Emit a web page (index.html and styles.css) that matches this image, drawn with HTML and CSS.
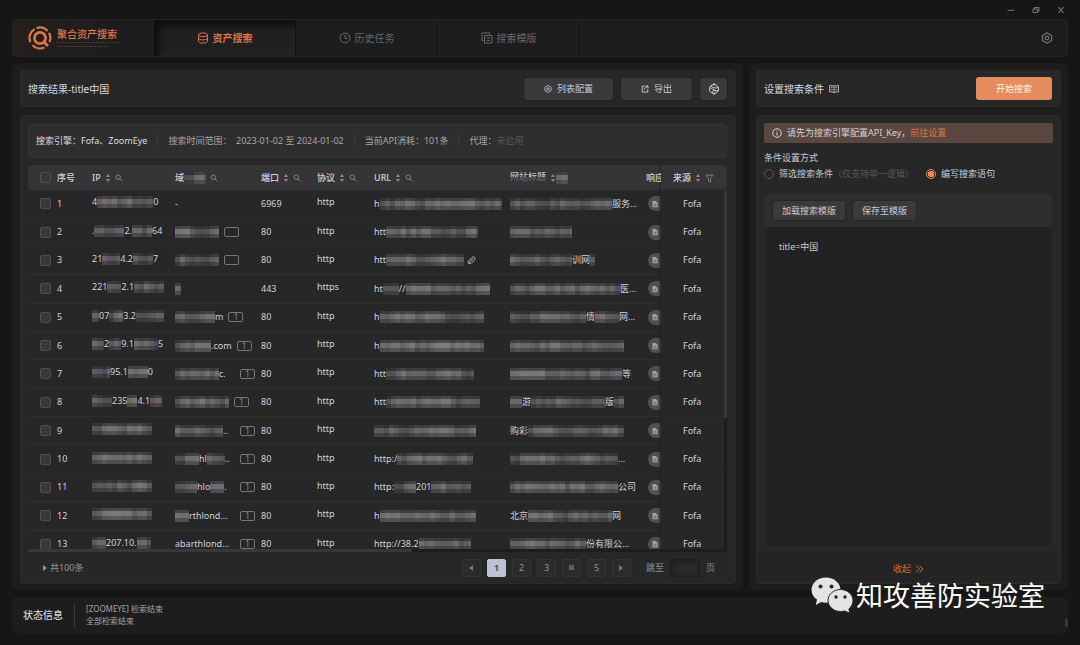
FILE: index.html
```html
<!DOCTYPE html>
<html lang="zh-CN">
<head>
<meta charset="utf-8">
<title>聚合资产搜索</title>
<link rel="stylesheet" href="styles.css">
</head>
<body>
<svg class="defs" aria-hidden="true">
  <symbol id="i-sort" viewBox="0 0 6 10"><path d="M3 1 5.2 4H.8zM3 9 .8 6h4.400z" fill="currentColor"/></symbol>
  <symbol id="i-search" viewBox="0 0 8 8"><circle cx="3.200" cy="3.200" r="2.200" fill="none" stroke="currentColor"/><path d="M5 5l2.300 2.300" stroke="currentColor"/></symbol>
  <symbol id="i-filter" viewBox="0 0 9 9"><path d="M1 1.200h7L5.500 4.500v3.600L3.500 7V4.500z" fill="none" stroke="currentColor" stroke-width=".9"/></symbol>
  <symbol id="i-doc" viewBox="0 0 8 8"><path d="M1.500 1h3.200L6.700 3v4.300H1.500z" fill="#9ba3b5"/><path d="M2.600 4.300h3M2.600 5.800h3" stroke="#55565c" stroke-width=".7"/></symbol>
  <symbol id="i-hex" viewBox="0 0 12 12"><path d="M6 .8l4.600 2.600v5.200L6 11.200 1.400 8.600V3.400z" fill="none" stroke="currentColor" stroke-width="1.200" stroke-linejoin="round"/><circle cx="6" cy="6" r="1.800" fill="none" stroke="currentColor" stroke-width="1.200"/></symbol>
</svg>
<div class="app">
  <header class="titlebar">
    <button aria-label="最小化"><svg viewBox="0 0 8 8"><path d="M.5 4.300h7" stroke="currentColor"/></svg></button>
    <button aria-label="还原"><svg viewBox="0 0 8 8"><path d="M1 3h4.500v3.500H1zM2.500 3V1.500H7V5H5.500" fill="none" stroke="currentColor"/></svg></button>
    <button aria-label="关闭"><svg viewBox="0 0 8 8"><path d="M1.500 1.200l5 5.600M6.500 1.200l-5 5.600" stroke="currentColor" stroke-width="1.100"/></svg></button>
  </header>

  <nav class="topbar">
    <div class="brand">
      <svg class="logo" viewBox="0 0 24 24" fill="none" stroke="#d9784b">
        <path d="M2.400 16.200A10.400 10.400 0 0 1 6.500 3.100M8.500 2.200A10.400 10.400 0 0 1 19.600 4.900M21 6.800A10.400 10.400 0 0 1 21.500 16M16.500 21.400A10.400 10.400 0 0 1 4.500 19.200" stroke-width="2.200"/>
        <circle cx="12" cy="12" r="5.600" stroke-width="2.600"/>
        <path d="M15.500 15.500l4.500 4.500" stroke-width="2.600"/>
      </svg>
      <div class="brand-name"><span>聚合资产搜索</span>
        <svg viewBox="0 0 62 7" class="tagline"><path d="M0 1.500h62" stroke="#4a413d" stroke-dasharray="2 1 1 1"/><path d="M0 5.500h52" stroke="#4a413d" stroke-dasharray="1 1 2 1"/></svg>
      </div>
    </div>
    <button class="tab active"><svg viewBox="0 0 12 12" fill="none" stroke="currentColor"><ellipse cx="6" cy="2.800" rx="4.500" ry="1.900"/><path d="M1.500 2.800v6.400c0 1.100 2 1.900 4.500 1.900s4.500-.8 4.500-1.900V2.800M1.500 6c0 1.100 2 1.900 4.500 1.900s4.500-.8 4.500-1.900"/></svg>资产搜索</button>
    <button class="tab"><svg viewBox="0 0 12 12" fill="none" stroke="currentColor"><circle cx="6" cy="6" r="4.900"/><path d="M6 3v3.300h2.500"/></svg>历史任务</button>
    <button class="tab"><svg viewBox="0 0 12 12" fill="none" stroke="currentColor"><path d="M3.500 3.500h7.500v7.500H3.500zM2.500 8.500H1V1h7.500v1.500M5.500 6h3.500M5.500 8.500h3.500"/></svg>搜索模版</button>
    <button class="gear" aria-label="设置"><svg><use href="#i-hex"/></svg></button>
  </nav>

  <main class="main">
    <section class="panel results">
      <div class="card head">
        <h1>搜索结果-title中国</h1>
        <div class="actions">
          <button class="btn wide"><svg><use href="#i-hex"/></svg>列表配置</button>
          <button class="btn"><svg viewBox="0 0 10 10" fill="none" stroke="currentColor" stroke-width="1.200"><path d="M5 1.500H1.500v7.300h7V5M4 6c.2-2 1.800-3.500 4.500-4M6 1.200h2.700V4"/></svg>导出</button>
          <button class="btn square" aria-label="网络"><svg viewBox="0 0 12 12" fill="none" stroke="currentColor"><circle cx="6" cy="6" r="4.500"/><path d="M6 0v2.500M6 9.500V12M1.500 5c3-.5 3.500 3.500 9 2.500M3 2.500c1 2.500 4 3 7.500 2M4 10c.5-2 1-3 4-2"/></svg></button>
        </div>
      </div>

      <div class="card list">
        <div class="summary">
          <span class="strong">搜索引擎：Fofa、ZoomEye</span>
          <span>搜索时间范围：&nbsp;&nbsp;2023-01-02 至 2024-01-02</span>
          <span>当前API消耗：101条</span>
          <span>代理：<em>未启用</em></span>
        </div>
        <div class="table-wrap">
          <table>
            <colgroup><col class="c-check"><col class="c-no"><col class="c-ip"><col class="c-domain"><col class="c-port"><col class="c-proto"><col class="c-url"><col><col class="c-resp"><col class="c-src"></colgroup>
            <thead><tr>
              <th class="check"><input type="checkbox" aria-label="全选"></th>
              <th>序号</th>
              <th>IP<svg class="sort"><use href="#i-sort"/></svg><svg class="find"><use href="#i-search"/></svg></th>
              <th><span class="cell" data-parts="域|22|"></span><svg class="find"><use href="#i-search"/></svg></th>
              <th>端口<svg class="sort"><use href="#i-sort"/></svg><svg class="find"><use href="#i-search"/></svg></th>
              <th>协议<svg class="sort"><use href="#i-sort"/></svg><svg class="find"><use href="#i-search"/></svg></th>
              <th>URL<svg class="sort"><use href="#i-sort"/></svg><svg class="find"><use href="#i-search"/></svg></th>
              <th><span class="masked">网站标题</span><svg class="sort"><use href="#i-sort"/></svg><span class="cell" data-parts="|12|"></span></th>
              <th class="resp">响应</th>
              <th class="src">来源<svg class="sort"><use href="#i-sort"/></svg><svg class="funnel"><use href="#i-filter"/></svg></th>
            </tr></thead>
            <tbody id="rows"></tbody>
          </table>
          <div class="vbar"><i></i></div>
          <div class="hbar"><i></i></div>
        </div>
        <footer class="pager">
          <span class="total"><svg viewBox="0 0 4 6"><path d="M0 0l4 3-4 3z" fill="currentColor"/></svg>共100条</span>
          <div class="pages">
            <button aria-label="上一页"><svg viewBox="0 0 4 6"><path d="M4 0L0 3l4 3z" fill="currentColor"/></svg></button>
            <button class="current">1</button><button>2</button><button>3</button>
            <button aria-label="更多" class="more"><i></i></button><button>5</button>
            <button aria-label="下一页"><svg viewBox="0 0 4 6"><path d="M0 0l4 3-4 3z" fill="currentColor"/></svg></button>
          </div>
          <label class="jump">跳至<input type="text" aria-label="页码">页</label>
        </footer>
      </div>
    </section>

    <aside class="panel side">
      <div class="card head">
        <h2>设置搜索条件</h2>
        <svg class="book" viewBox="0 0 10 8" fill="none" stroke="currentColor" stroke-width=".9"><path d="M5 1.200C3.800.6 2 .6.600.6v6.200c1.400 0 3.200 0 4.400.7 1.200-.7 3-.7 4.400-.7V.6C8 .6 6.200.6 5 1.200zM5 1.200v6.300M2 2.600h1.500M2 4.500h1.500M6.500 2.600H8M6.500 4.500H8"/></svg>
        <button class="start">开始搜索</button>
      </div>
      <div class="card conditions">
        <div class="form">
          <p class="alert"><svg viewBox="0 0 10 10" fill="none" stroke="currentColor"><circle cx="5" cy="5" r="4.300"/><path d="M5 4.300v3.200M5 2.300v1.100"/></svg>请先为搜索引擎配置API_Key，<a href="#">前往设置</a></p>
          <fieldset>
            <legend>条件设置方式</legend>
            <label><input type="radio" name="mode">筛选搜索条件<em>（仅支持单一逻辑）</em></label>
            <label><input type="radio" name="mode" checked>编写搜索语句</label>
          </fieldset>
          <div class="editor">
            <div class="tools"><button>加载搜索模版</button><button>保存至模版</button></div>
            <textarea aria-label="搜索语句" spellcheck="false">title=中国</textarea>
          </div>
        </div>
        <button class="collapse">收起<svg viewBox="0 0 9 8" fill="none" stroke="currentColor"><path d="M1 .5L4.500 4 1 7.500M4.500.5L8 4 4.500 7.500"/></svg></button>
      </div>
    </aside>
  </main>

  <footer class="status">
    <strong>状态信息</strong>
    <p>[ZOOMEYE] 检索结束<br>全部检索结束</p>
    <i class="grip"></i>
  </footer>
</div>
<div class="watermark">
  <svg viewBox="0 0 42 36">
    <path d="M15 .5C7 .5.5 5.900.5 13c0 4 2 7.300 5.500 9.600L4.800 28l5.400-3c1.500.5 3.200.7 4.800.7C23 25.700 29.500 20 29.500 13S23 .5 15 .5z" fill="#e4e4e4"/>
    <path d="M29.500 12.500c-7 0-12.500 5-12.500 11s5.500 11 12.500 11c1.500 0 3-.2 4.300-.6l5.200 2.500-1.200-4.400c2.500-2 4.200-5 4.200-8.500 0-6-5.500-11-12.500-11z" fill="#e4e4e4" stroke="#222" stroke-width="1"/>
    <g fill="#222"><circle cx="9.500" cy="9.500" r="2"/><circle cx="20.500" cy="9.500" r="2"/><circle cx="25" cy="20" r="1.700"/><circle cx="34" cy="20" r="1.700"/></g>
  </svg><span>知攻善防实验室</span>
</div>
<script src="rows.js"></script>
</body>
</html>
```

FILE: styles.css
```css
* { box-sizing: border-box; }
body {
  margin: 0;
  background: #161616;
  color: #c9cad2;
  font: 9px/12px "Noto Sans", "Noto Sans CJK SC", sans-serif;
}
button, input, textarea { font: inherit; color: inherit; margin: 0; }
button { border: 0; padding: 0; background: none; cursor: pointer; }
em { font-style: normal; color: #58585b; }
h1, h2, p { margin: 0; font-weight: 400; }
h1, h2 { font-size: 10px; line-height: 16px; color: #d8d9e2; }
svg { flex: none; }
.defs { position: absolute; width: 0; height: 0; }
.app { display: flex; flex-direction: column; height: 100vh; padding: 0 12px 12px; }

.titlebar { display: flex; justify-content: flex-end; align-items: center; gap: 17px; height: 19px; padding: 0 3px 0 0; color: #77777a; }
.titlebar button { display: flex; }
.titlebar svg { width: 8px; height: 8px; }

.topbar { display: flex; height: 38px; margin-bottom: 6px; border: 1px solid #242424; border-radius: 4px; background: #1d1d1d; }
.brand { display: flex; align-items: center; gap: 5px; width: 141px; padding-left: 15px; border-radius: 4px 0 0 4px; background: linear-gradient(90deg, #251f1d, #1d1d1d 70%); }
.logo { width: 24px; height: 24px; }
.brand-name { display: flex; flex-direction: column; gap: 1px; color: #d9784b; font-size: 10px; font-weight: 500; }
.tagline { width: 62px; height: 7px; }
.tab { display: flex; align-items: center; justify-content: center; gap: 4px; width: 142px; border-right: 1px solid #111; box-shadow: 1px 0 #252525; color: #68686b; font-size: 10px; }
.tab svg { width: 12px; height: 12px; }
.tab.active { color: #dd7245; font-weight: 700; background: #202020; box-shadow: inset 5px 5px 7px #0d0d0d, inset -2px -2px 6px #292929; }
.gear { display: flex; align-items: center; margin-left: auto; padding-right: 14px; color: #747477; }
.gear svg { width: 12px; height: 12px; }

.main { display: grid; grid-template-columns: 731fr 319fr; flex: 1; min-height: 0; gap: 6px; }
.panel { display: flex; flex-direction: column; gap: 8px; min-width: 0; min-height: 0; padding: 7px 7px 6px; border-radius: 7px; background: #1d1d1d; }
.results { padding-left: 8px; }
.card { border: 1px solid #2b2b2b; border-radius: 4px; background: #272727; }
.head { display: flex; align-items: center; flex: none; height: 37px; padding: 0 8px 0 7px; }
.actions { display: flex; gap: 8px; margin-left: auto; }
.btn { display: flex; align-items: center; justify-content: center; gap: 5px; width: 71px; height: 22px; border-radius: 3px; background: #3a3a3b; box-shadow: 0 0 2px #181818; }
.btn svg { width: 8px; height: 8px; }
.btn.wide { width: 89px; }
.btn.square { width: 27px; }
.btn.square svg { width: 12px; height: 12px; }

.list { display: flex; flex: 1; flex-direction: column; min-height: 0; }
.summary { display: flex; align-items: center; flex: none; height: 34px; margin: 8px 8px 7px 7px; padding-left: 7px; border: 1px solid #353535; border-radius: 4px; background: #2e2e2e; color: #a6a6ad; white-space: nowrap; }
.summary span { padding-right: 10px; margin-right: 10px; border-right: 1px solid #3c3c3c; }
.summary span:last-child { border: 0; }
.summary .strong { color: #dcdce3; }

.table-wrap { position: relative; flex: 1; min-height: 0; margin: 0 8px 0 7px; overflow: hidden; }
table { width: 100%; height: 394px; table-layout: fixed; border-collapse: separate; border-spacing: 0; }
th, td { padding: 0; text-align: left; font-weight: 400; white-space: nowrap; color: #d2d2da; }
th { height: 25px; background: #353537; font-weight: 500; }
th:first-child { border-radius: 4px 0 0 4px; }
th:last-child { border-radius: 0 4px 4px 0; }
td { border-bottom: 1px solid #2e2e2e; }
.check { padding-left: 12px; }
.c-check { width: 29px; }
.c-no { width: 35px; }
.c-ip { width: 83px; }
.c-domain { width: 86px; }
.c-port { width: 56px; }
.c-proto { width: 57px; }
.c-url { width: 136px; }
.c-resp { width: 15px; }
.c-src { width: 66px; }
.raised { padding-bottom: 3px; }
th svg { color: #85858b; vertical-align: middle; }
.sort { width: 6px; height: 10px; margin-left: 4px; }
.find { width: 8px; height: 8px; margin-left: 4px; }
.funnel { width: 9px; height: 9px; margin-left: 4px; }
input[type="checkbox"] { display: block; appearance: none; width: 11px; height: 11px; border: 1px solid #505052; border-radius: 2px; background: #38383a; }
.cell { display: inline-flex; align-items: center; height: 15px; vertical-align: middle; }
.cell svg { display: block; }
.masked { display: inline-block; background: linear-gradient(#d2d2da 50%, #68686d 50%); background-clip: text; color: transparent; }
.resp { overflow: hidden; }
td.resp div { display: flex; align-items: center; width: 13px; height: 15px; padding-left: 3px; border-radius: 8px 2px 2px 8px; background: #505050; overflow: hidden; margin-left: 2px; }
td.resp svg { width: 8px; height: 8px; }
.src { padding-left: 12px; box-shadow: -1px 0 2px #202020; }
td.src { padding-left: 22px; background: #272727; }
.count { display: inline-flex; justify-content: center; align-items: center; width: 15px; height: 10px; margin-left: 5px; border: 1px solid #77777b; border-radius: 2px; font-size: 8px; line-height: 8px; color: #8a8a8e; }
.count.end { margin-left: auto; }
.cell.domain { width: 80px; }
.clip { width: 9px; height: 9px; margin-left: 3px; }
.vbar { position: absolute; top: 25px; right: 0; bottom: 0; width: 3px; background: #1d1d1d; }
.vbar i { display: block; height: 63%; border-radius: 2px; background: #38383a; }
.hbar { position: absolute; left: 0; right: 0; bottom: 0; height: 3px; background: #1d1d1d; }
.hbar i { display: block; width: 55%; height: 3px; border-radius: 2px; background: #38383a; }

.pager { display: flex; align-items: center; flex: none; height: 31px; padding: 0 20px 0 22px; color: #95959b; }
.total { display: flex; align-items: center; gap: 3px; margin-right: auto; }
.total svg, .pages svg { width: 4px; height: 6px; }
.pages { display: flex; gap: 6px; }
.pages button { display: flex; align-items: center; justify-content: center; width: 19px; height: 18px; border: 1px solid #343434; border-radius: 2px; background: #2b2b2b; }
.pages button.current { border-color: #bfc1d4; background: #bfc1d4; color: #4c4d58; font-weight: 700; }
.pages svg { color: #77777b; }
.more i { width: 5px; height: 5px; background: #606063; }
.jump { display: flex; align-items: center; gap: 6px; margin-left: 15px; }
.jump input { width: 30px; height: 18px; padding: 0 4px; border: 1px solid #1d1d1d; border-radius: 2px; background: #29292b; box-shadow: inset 1px 1px 4px #1b1b1b; }

.book { width: 10px; height: 8px; margin-left: 5px; }
.start { width: 76px; height: 23px; margin-left: auto; border-radius: 3px; background: #e48c5e; color: #fff3ea; }
.conditions { display: flex; flex: 1; flex-direction: column; min-height: 0; }
.form { display: flex; flex: 1; flex-direction: column; min-height: 0; padding: 7px 7px 6px; }
.alert { display: flex; align-items: center; flex: none; height: 20px; padding-left: 8px; border-radius: 2px; background: #594740; color: #d6d0d2; }
.alert svg { width: 10px; height: 10px; margin-right: 5px; }
a { color: #da7548; text-decoration: none; }
fieldset { display: flex; flex-wrap: wrap; gap: 12px; min-width: 0; margin: 9px 0 13px; padding: 0; border: 0; }
legend { padding: 0; margin-bottom: 4px; }
fieldset label { display: flex; align-items: center; height: 12px; white-space: nowrap; }
input[type="radio"] { appearance: none; width: 10px; height: 10px; margin-right: 5px; border: 1px solid #55565a; border-radius: 5px; }
input[type="radio"]:checked { border-color: #e48c5e; background: radial-gradient(#e48c5e 0 3px, transparent 3px); }
.editor { display: flex; flex: 1; flex-direction: column; min-height: 0; border: 1px solid #2a2a2a; border-radius: 4px; background: #222; overflow: hidden; }
.tools { display: flex; flex: none; gap: 8px; height: 33px; padding: 7px 8px; background: #2e2e2e; }
.tools button { padding: 0 9px; border-radius: 2px; background: #3a3a3b; box-shadow: 0 0 2px #171717; }
textarea { flex: 1; width: 100%; padding: 14px; border: 0; background: none; resize: none; outline: 0; }
.collapse { display: flex; flex: none; align-items: center; justify-content: center; gap: 4px; height: 30px; border-top: 1px solid #202020; background: #242424; color: #d3683a; }
.collapse svg { width: 9px; height: 8px; }

.status { position: relative; display: flex; align-items: center; flex: none; height: 36px; margin-top: 7px; padding-left: 11px; border-radius: 5px; background: #1d1d1d; }
.status strong { font-size: 10px; font-weight: 500; color: #d2d2d9; }
.status p { margin-left: 11px; padding-left: 11px; border-left: 1px solid #3b3b3b; font-size: 8px; color: #a2a2a6; }
.grip { position: absolute; right: 0; bottom: 6px; width: 3px; height: 8px; border-radius: 1px; background: #38383b; }
.watermark { position: absolute; right: 35px; bottom: 32px; display: flex; align-items: center; gap: 3px; color: #fff; font: 27px/36px "Noto Sans CJK SC", sans-serif; }
.watermark svg { width: 42px; height: 36px; }
```

FILE: rows.js
```js
// Cell parts alternate between plain text and the width of a redacted run.
const rows = [
  ["4|56|0", "-||", "", "6969", "http", "h|122|", "|102|服务..."],
  [".|30|2.|20|64", "|44|", "0", "80", "http", "htt|92|", "|62|"],
  ["21|18|4.2|20|7", "|44|", "0", "80", "http", "htt|78|", "|62|训网|5|", "clip"],
  ["221|14|2.1|30|", "|6|", "", "443", "https", "ht|16|//|84|", "|110|医..."],
  ["|7|07|14|3.2|28|", "|40|m", "1", "80", "http", "h|104|", "|76|情|24|网..."],
  ["|12|2|12|9.1|24|5", "|36|.com", "1", "80", "http", "h|104|", "|62|  |52|"],
  ["|18|95.1|20|0", "|44|c.", "e", "80", "http", "htt|88|", "|112|等"],
  ["|20|235|10|4.1|12|", "|54|", "1", "80", "http", "htt|94|", "|12|游|46|  |28|版|10|"],
  ["|60|", "|48|..", "e", "80", "http", "|102|", "购彩|96|"],
  ["|60|", "|24|hl|18|..", "e", "80", "http", "http:/|76|", "|108|..."],
  ["|60|", "|22|hlo|14|.", "e", "80", "http", "http:|22|201|40|", "|108|公司"],
  ["|60|", "|14|rthlond...", "e", "80", "http", "h|96|", "北京|84|网"],
  ["|14|207.10.|14|", "abarthlond...", "e", "80", "http", "http://38.2|52|", "|76|份有限公..."]
];

let seed = 17;
const rand = () => (seed = (seed * 16807) % 2147483647) / 2147483647;

function mosaic(width) {
  let tiles = "";
  let core = 90;
  for (let x = 0; x < width; x += 5) {
    const w = Math.min(5, width - x);
    core = core * 0.4 + (70 + rand() * 60) * 0.6;
    [core * 0.6, core, core * 0.72].forEach((tone, line) => {
      const c = Math.round(tone);
      tiles += `<rect x="${x}" y="${line * 5}" width="${w}" height="5" fill="rgb(${c},${c},${c + 3})"/>`;
    });
  }
  return `<svg width="${width}" height="12" viewBox="0 2 ${width} 12" shape-rendering="crispEdges">${tiles}</svg>`;
}

const parts = text => text.split("|").map((p, i) => i % 2 ? (p ? mosaic(+p) : "") : `<span>${p}</span>`).join("");

document.querySelectorAll("[data-parts]").forEach(el => { el.innerHTML = parts(el.dataset.parts); });

const clip = `<svg class="clip" viewBox="0 0 9 9" fill="none" stroke="#b8b8c0"><path d="M2 7.800C.5 6.500 1 5.500 2 4.500l3-3c2-1.500 4 .5 2.500 2.500L4 7.500C3 8.500 1.500 7 2.500 6L6 2.800"/></svg>`;

document.getElementById("rows").innerHTML = rows.map((r, i) => {
  const end = r[2] === "e";
  const badge = r[2] === "" ? "" : `<span class="count${end ? " end" : ""}">${r[2] === "0" ? "" : "1"}</span>`;
  return `<tr>
    <td class="check"><input type="checkbox" aria-label="选择第${i + 1}行"></td>
    <td>${i + 1}</td>
    <td class="raised"><span class="cell">${parts(r[0])}</span></td>
    <td><span class="cell${end ? " domain" : ""}">${parts(r[1])}${badge}</span></td>
    <td>${r[3]}</td>
    <td class="raised">${r[4]}</td>
    <td><span class="cell">${parts(r[5])}${r[7] ? clip : ""}</span></td>
    <td><span class="cell">${parts(r[6])}</span></td>
    <td class="resp"><div><svg><use href="#i-doc"/></svg></div></td>
    <td class="src">Fofa</td>
  </tr>`;
}).join("");
```
